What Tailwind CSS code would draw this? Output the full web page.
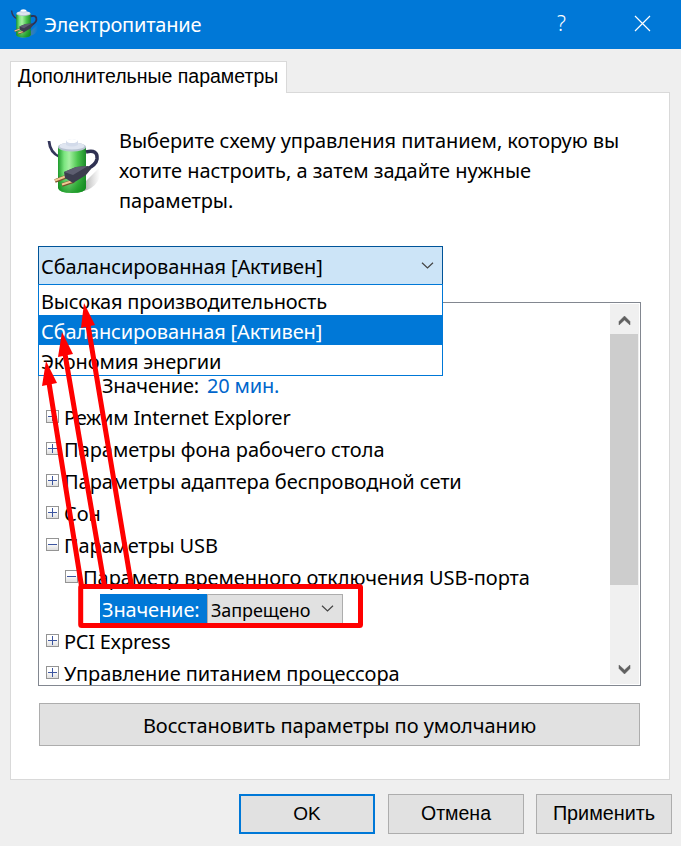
<!DOCTYPE html>
<html lang="ru">
<head>
<meta charset="utf-8">
<title>Электропитание</title>
<script src="https://cdn.jsdelivr.net/npm/@tailwindcss/browser@4"></script>
</head>
<body class="w-[681px] h-[846px] overflow-hidden bg-[#efefef] text-black text-[20px] font-['Noto_Sans','Open_Sans',sans-serif]">
<svg class="absolute h-0 w-0">
  <defs>
    <linearGradient id="green" x1="0" x2="1">
      <stop offset="0" stop-color="#1e9a2c"/><stop offset=".22" stop-color="#7be57f"/><stop offset=".4" stop-color="#a6f0a2"/><stop offset=".7" stop-color="#4cc64f"/><stop offset="1" stop-color="#1c8a2a"/>
    </linearGradient>
    <linearGradient id="shade" x1="0" x2="0" y1="0" y2="1">
      <stop offset=".55" stop-color="#0a8a18" stop-opacity="0"/><stop offset="1" stop-color="#0a8a18" stop-opacity=".75"/>
    </linearGradient>
    <linearGradient id="box" x1="0" x2="0" y1="0" y2="1">
      <stop offset=".4" stop-color="#fff"/><stop offset="1" stop-color="#dcdcdc"/>
    </linearGradient>
    <linearGradient id="shadow" x1="0" x2="1">
      <stop offset=".3" stop-color="#777" stop-opacity=".65"/><stop offset="1" stop-color="#999" stop-opacity="0"/>
    </linearGradient>
    <symbol id="battery" viewBox="0 0 54 58">
      <path d="M28 54 52 30Q56 42 44 50Q38 54 28 54Z" fill="url(#shadow)"/>
      <path d="M2 3Q3 15 13 19" fill="none" stroke="#34365a" stroke-width="2.8"/>
      <path d="M11 9V50Q12 55 25 55Q38 55 39 50V9Z" fill="url(#green)"/>
      <path d="M11 9V50Q12 55 25 55Q38 55 39 50V9Z" fill="url(#shade)"/>
      <ellipse cx="25" cy="9" rx="14" ry="4.5" fill="#b7c3d0"/>
      <ellipse cx="25" cy="8" rx="12.5" ry="3.6" fill="#dfe5f0"/>
      <path d="M19 7V3Q25-1 31 3V7Q25 10 19 7Z" fill="#d3dbea"/>
      <ellipse cx="25" cy="3" rx="5.5" ry="2" fill="#fff"/>
      <path d="M39 14Q51 11 50 21Q49 27 40 31" fill="none" stroke="#2f3152" stroke-width="3.6"/>
      <path d="M21 38 8 43M27 43 15 47" stroke="#7b5230" stroke-width="3.6"/>
      <path d="M21 37.5 8 42.5M27 42.5 15 46.5" stroke="#f0c792" stroke-width="2"/>
      <path d="M17 34 29 29 41 28 44 31 39 37 31 42 26 45 18 40Z" fill="#3c3d4e"/>
      <path d="M17 34 29 29 41 28 26 37Z" fill="#5d5e70"/>
    </symbol>
    <symbol id="plus" viewBox="0 0 13 13">
      <rect x=".5" y=".5" width="12" height="12" fill="url(#box)" stroke="#949494"/>
      <path d="M2 6.5H11M6.5 2V11" stroke="#3c55a0"/>
    </symbol>
    <symbol id="minus" viewBox="0 0 13 13">
      <rect x=".5" y=".5" width="12" height="12" fill="url(#box)" stroke="#949494"/>
      <path d="M2 6.5H11" stroke="#3c55a0"/>
    </symbol>
  </defs>
</svg>

<div class="relative flex h-full w-full flex-col">
  <header class="flex h-[49px] shrink-0 items-center bg-[#0078d7] pl-[10px] text-white">
    <svg class="mb-[2px] h-[30px] w-[29px]"><use href="#battery"/></svg>
    <h1 class="ml-[5px] tracking-[-0.2px]">Электропитание</h1>
    <span class="ml-auto mr-[66px] mb-[2px] w-[13px] text-center text-[21px] font-light">?</span>
    <svg class="mr-[30px] mb-[2px] h-[17px] w-[17px]" viewBox="0 0 17 17"><path d="M1 1 16 16M16 1 1 16" fill="none" stroke="#fff" stroke-width="1.2"/></svg>
  </header>

  <main class="flex flex-col px-[10px] pt-[12px]">
    <div class="z-10 mb-[-1px] flex h-[32px] w-[277px] items-center whitespace-nowrap border border-b-0 border-[#d9d9d9] bg-white pl-[7px] pb-[2px] font-['Liberation_Sans',Arial,sans-serif] text-[19.5px]">Дополнительные параметры</div>
    <section class="flex h-[688px] w-[660px] flex-col border border-[#d9d9d9] bg-white pl-[27px]">
      <div class="mt-[33px] flex h-[90px]">
        <svg class="ml-[9px] mt-[12px] h-[58px] w-[54px] shrink-0"><use href="#battery"/></svg>
        <p class="ml-[18px] whitespace-nowrap leading-[30px] tracking-[-0.05px]">Выберите схему управления питанием, которую вы<br>хотите настроить, а затем задайте нужные<br>параметры.</p>
      </div>

      <div class="relative z-10 mt-[30px] flex h-[39px] w-[405px] items-center justify-between border border-[#005499] bg-[#cce4f7] pl-[2px] pr-[8px]">
        <span class="mt-[3px] tracking-[-0.13px]">Сбалансированная [Активен]</span>
        <svg class="h-[7px] w-[13px]" viewBox="0 0 13 7"><path d="M1 .7 6.5 6 12 .7" fill="none" stroke="#444" stroke-width="1.2"/></svg>
        <ul class="absolute left-[-1px] top-[37px] w-[405px] border border-[#0078d7] bg-white leading-[30px]">
          <li class="h-[30px] pl-[2px] pt-[2px] tracking-[-0.18px]">Высокая производительность</li>
          <li class="h-[30px] bg-[#0078d7] pl-[2px] pt-[2px] tracking-[-0.15px] text-white">Сбалансированная [Активен]</li>
          <li class="h-[30px] pl-[2px] pt-[2px] tracking-[-0.15px]">Экономия энергии</li>
        </ul>
      </div>

      <div class="mt-[17px] flex h-[384px] w-[603px] justify-between overflow-hidden border border-[#828790] p-px pr-0">
        <div class="flex flex-col whitespace-nowrap pl-[6px] pt-[66px] leading-[32px] tracking-[-0.07px]">
          <div class="flex h-[32px] shrink-0 gap-[8px] pl-[56px] tracking-[-0.2px]">Значение: <span class="text-[#0066cc]">20 мин.</span></div>
          <div class="flex h-[32px] shrink-0 gap-[5px] tracking-[-0.21px]"><svg class="mt-[8px] h-[13px] w-[13px]"><use href="#plus"/></svg>Режим Internet Explorer</div>
          <div class="flex h-[32px] shrink-0 gap-[5px] tracking-[-0.03px]"><svg class="mt-[8px] h-[13px] w-[13px]"><use href="#plus"/></svg>Параметры фона рабочего стола</div>
          <div class="flex h-[32px] shrink-0 gap-[5px]"><svg class="mt-[8px] h-[13px] w-[13px]"><use href="#plus"/></svg>Параметры адаптера беспроводной сети</div>
          <div class="flex h-[32px] shrink-0 gap-[5px]"><svg class="mt-[8px] h-[13px] w-[13px]"><use href="#plus"/></svg>Сон</div>
          <div class="flex h-[32px] shrink-0 gap-[5px] tracking-[-0.15px]"><svg class="mt-[8px] h-[13px] w-[13px]"><use href="#minus"/></svg>Параметры USB</div>
          <div class="flex h-[32px] shrink-0 gap-[5px] pl-[19px]"><svg class="mt-[8px] h-[13px] w-[13px]"><use href="#minus"/></svg>Параметр временного отключения USB-порта</div>
          <div class="flex h-[32px] shrink-0 pl-[54px]">
            <span class="w-[107px] bg-[#0078d7] pl-[2px] tracking-[-0.15px] text-white">Значение:</span>
            <span class="flex w-[136px] items-center justify-between border border-[#adadad] bg-[#e1e1e1] pl-[3px] pr-[8px] text-[18px]">Запрещено
              <svg class="mb-[3px] h-[7px] w-[13px]" viewBox="0 0 13 7"><path d="M1 .7 6.5 6 12 .7" fill="none" stroke="#444" stroke-width="1.2"/></svg>
            </span>
          </div>
          <div class="flex h-[32px] shrink-0 gap-[5px] tracking-[-0.25px]"><svg class="mt-[8px] h-[13px] w-[13px]"><use href="#plus"/></svg>PCI Express</div>
          <div class="flex h-[32px] shrink-0 gap-[5px]"><svg class="mt-[8px] h-[13px] w-[13px]"><use href="#plus"/></svg>Управление питанием процессора</div>
        </div>
        <div class="mr-[1px] flex w-[29px] shrink-0 flex-col items-center bg-[#f0f0f0]">
          <svg class="h-[30px] w-[29px] shrink-0" viewBox="0 0 29 30"><path d="M9 21V17.5L14.5 12 20 17.5V21L14.5 16Z" fill="#606060" stroke="#606060" stroke-width=".5"/></svg>
          <div class="mr-[1px] h-[251px] w-[28px] bg-[#cdcdcd]"></div>
          <svg class="mt-auto h-[30px] w-[29px] shrink-0" viewBox="0 0 29 30"><path d="M9 11V14.5L14.5 20 20 14.5V11L14.5 16Z" fill="#606060" stroke="#606060" stroke-width=".5"/></svg>
        </div>
      </div>

      <button class="ml-[1px] mt-[17px] h-[43px] w-[601px] border border-[#adadad] bg-[#e1e1e1] pt-[2px] tracking-[-0.04px]">Восстановить параметры по умолчанию</button>
    </section>
  </main>

  <footer class="mt-[14px] flex justify-end gap-[12px] pr-[9px] font-['Liberation_Sans',Arial,sans-serif]">
    <button class="mr-[1px] h-[40px] w-[136px] border-2 border-[#0078d7] bg-[#e1e1e1] text-[19px]">OK</button>
    <button class="h-[40px] w-[136px] border border-[#adadad] bg-[#e1e1e1] text-[19.5px]">Отмена</button>
    <button class="h-[40px] w-[136px] border border-[#adadad] bg-[#e1e1e1] text-[19.8px]">Применить</button>
  </footer>

  <svg class="absolute inset-0 z-20 h-[846px] w-[681px]" viewBox="0 0 681 846">
    <rect x="80.7" y="586.5" width="279.8" height="39" rx="1" fill="none" stroke="#f00" stroke-width="5"/>
    <path d="M81.5 586 49 383M104.5 586 65 354M131.5 586 88 325" stroke="#f00" stroke-width="5"/>
    <path d="M46 361 42 386 57 383ZM62 332 58 357 73 354ZM84 303 81 328 95 325Z" fill="#f00"/>
  </svg>
</div>
</body>
</html>
